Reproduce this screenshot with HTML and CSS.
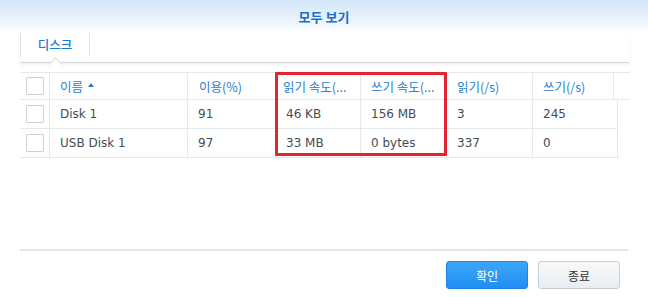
FILE: index.html
```html
<!DOCTYPE html>
<html>
<head>
<meta charset="utf-8">
<title>모두 보기</title>
<link rel="stylesheet" href="styles.css">
</head>
<body>

<div class="dialog">
	<div class="titlebar">모두 보기</div>

	<div class="tabs">
		<div class="tab active">디스크</div>
	</div>

	<div class="grid-wrap">
		<div class="grid-head">
			<div class="cell check"><span class="box"></span></div>
			<div class="cell">이름<span class="sort"></span></div>
			<div class="cell">이용(%)</div>
			<div class="cell">읽기 속도(...</div>
			<div class="cell">쓰기 속도(...</div>
			<div class="cell">읽기(/s)</div>
			<div class="cell">쓰기(/s)</div>
			<div class="cell spacer"></div>
		</div>
		<div class="grid-row">
			<div class="cell check"><span class="box"></span></div>
			<div class="cell">Disk 1</div>
			<div class="cell">91</div>
			<div class="cell">46 KB</div>
			<div class="cell">156 MB</div>
			<div class="cell">3</div>
			<div class="cell">245</div>
		</div>
		<div class="grid-row">
			<div class="cell check"><span class="box"></span></div>
			<div class="cell">USB Disk 1</div>
			<div class="cell">97</div>
			<div class="cell">33 MB</div>
			<div class="cell">0 bytes</div>
			<div class="cell">337</div>
			<div class="cell">0</div>
		</div>
		<!-- annotation over the speed columns -->
		<div class="highlight"></div>
	</div>

	<div class="footer">
		<button class="btn primary">확인</button>
		<button class="btn">종료</button>
	</div>
</div>

</body>
</html>
```

FILE: styles.css
```css
body {
	margin: 0;
	background: #fff;
	font-family: "DejaVu Sans", "Noto Sans CJK KR", sans-serif;
	font-size: 12px;
	color: #434c56;
}

.dialog {
	width: 648px;
	height: 297px;
	display: flex;
	flex-direction: column;
}

.titlebar {
	height: 33px;
	line-height: 34px;
	text-align: center;
	font-family: "Noto Sans CJK KR", sans-serif;
	font-size: 13px;
	font-weight: 700;
	color: #1a6fc6;
	background: linear-gradient(#d3e6f8, #eef6fd 70%, #fff);
}

.tabs {
	position: relative;
	height: 29px;
	margin: 0 19px 0 20px;
	border-bottom: 1px solid #d4d6d8;
	box-shadow: 0 2px 3px rgba(0, 0, 0, 0.05);
	display: flex;
	align-items: flex-start;
}
.tab {
	width: 68px;
	height: 24px;
	line-height: 24px;
	text-align: center;
	border-left: 1px solid #dde3e8;
	border-right: 1px solid #dde3e8;
	font-family: "Noto Sans CJK KR", sans-serif;
	font-size: 12.5px;
	font-weight: 500;
	color: #1f78cf;
	position: relative;
}
.tab.active::after {
	content: "";
	position: absolute;
	left: 30px;
	top: 26px;
	width: 8px;
	height: 8px;
	background: #fff;
	border-top: 1px solid #d4d6d8;
	border-left: 1px solid #d4d6d8;
	transform: rotate(45deg);
}

.grid-wrap {
	position: relative;
	height: 177px;
	margin-top: 9px;
	padding-left: 20px;
}

.grid-head, .grid-row {
	display: grid;
	border-bottom: 1px solid #e3e8ed;
}
.grid-head {
	grid-template-columns: 30px 138px 88px 85px 86px 86px 81px 16px;
	height: 26px;
	border-top: 1px solid #e3e8ed;
	width: 610px;
}
.grid-row {
	grid-template-columns: 30px 138px 88px 85px 86px 86px 85px;
	height: 28px;
	width: 598px;
}

.cell {
	display: flex;
	align-items: center;
	padding-left: 10px;
	border-right: 1px solid #e3e8ed;
	white-space: nowrap;
	overflow: hidden;
}
.grid-head .cell {
	color: #2a80d4;
	font-family: "Noto Sans CJK KR", "DejaVu Sans", sans-serif;
	font-size: 12.5px;
}
.grid-head .cell.spacer {
	border-right: 0;
}
.grid-head .cell:nth-child(3) {
	padding-left: 11px;
}
.grid-head .cell:nth-child(4) {
	padding-left: 7px;
}
.cell.check {
	padding-left: 6px;
}
.box {
	width: 16px;
	height: 16px;
	border: 1px solid #c9d0d6;
	background: #fff;
	border-radius: 1px;
}
.sort {
	width: 0;
	height: 0;
	margin-left: 5px;
	margin-top: -2px;
	border-left: 3px solid transparent;
	border-right: 3px solid transparent;
	border-bottom: 4px solid #217bd2;
}

.highlight {
	position: absolute;
	left: 275px;
	top: 0;
	width: 166px;
	height: 78px;
	border: 3px solid #e2252e;
	border-radius: 1px;
}

.footer {
	margin: 0 20px;
	border-top: 2px solid #e4e4e4;
	padding: 10px 8px 0 0;
	display: flex;
	justify-content: flex-end;
	gap: 10px;
}
.btn {
	width: 82px;
	height: 28px;
	border-radius: 3px;
	font-family: "Noto Sans CJK KR", sans-serif;
	font-size: 12px;
	color: #333;
	border: 1px solid #c6cfd7;
	background: linear-gradient(#f8f9fb, #e9edf1);
	padding: 0;
}
.btn.primary {
	color: #fff;
	border-color: #1f84de;
	background: linear-gradient(#3ba6fa, #1f8ef0);
}
```
